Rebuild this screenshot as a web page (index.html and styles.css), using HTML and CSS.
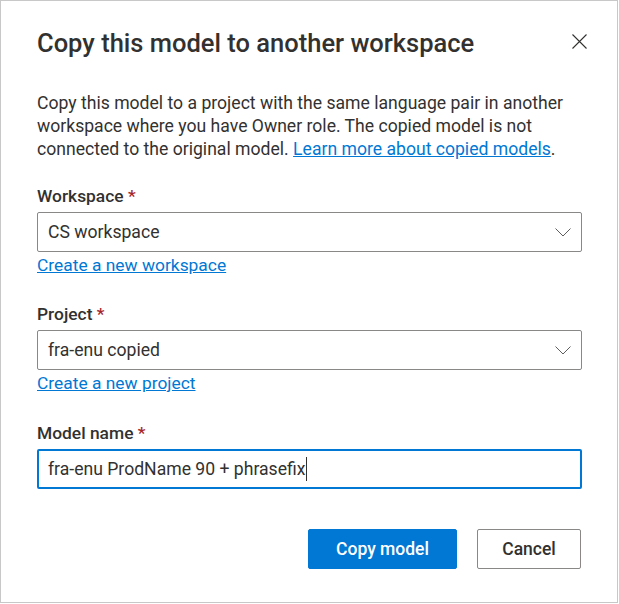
FILE: index.html
```html
<!DOCTYPE html>
<html lang="en">
<head>
<meta charset="utf-8">
<title>Copy this model to another workspace</title>
<link rel="stylesheet" href="styles.css">
</head>
<body>
<div class="dialog">
  <div class="header">
    <h1 class="title">Copy this model to another workspace</h1>
    <button class="close" aria-label="Close">
      <svg width="15" height="15" viewBox="0 0 15 15"><path d="M0.5 0.5 L14.5 14.5 M14.5 0.5 L0.5 14.5" stroke="#323130" stroke-width="1.1" fill="none"/></svg>
    </button>
  </div>
  <p class="desc">Copy this model to a project with the same language pair in another workspace where you have Owner role. The copied model is not connected to the original model. <a href="#" class="link">Learn more about copied models</a>.</p>

  <div class="field">
    <div class="label">Workspace <span class="req">*</span></div>
    <div class="select"><span>CS workspace</span>
      <svg class="chev" width="16" height="9" viewBox="0 0 16 9"><path d="M0.5 0.5 L8 8 L15.5 0.5" stroke="#605e5c" stroke-width="1" fill="none"/></svg>
    </div>
    <a href="#" class="link sub">Create a new workspace</a>
  </div>

  <div class="field second">
    <div class="label">Project <span class="req">*</span></div>
    <div class="select"><span>fra-enu copied</span>
      <svg class="chev" width="16" height="9" viewBox="0 0 16 9"><path d="M0.5 0.5 L8 8 L15.5 0.5" stroke="#605e5c" stroke-width="1" fill="none"/></svg>
    </div>
    <a href="#" class="link sub">Create a new project</a>
  </div>

  <div class="field third">
    <div class="label">Model name <span class="req">*</span></div>
    <div class="input"><span>fra-enu ProdName 90 + phrasefix</span><span class="caret"></span></div>
  </div>

  <div class="actions">
    <button class="btn primary">Copy model</button>
    <button class="btn secondary">Cancel</button>
  </div>
</div>
</body>
</html>
```

FILE: styles.css
```css
html, body {
  margin: 0;
  padding: 0;
  background: #ffffff;
}
body {
  font-family: Roboto, "Open Sans", sans-serif;
  color: #323130;
}
.dialog {
  box-sizing: border-box;
  width: 618px;
  height: 603px;
  border: 1px solid #c8c8c8;
  padding: 0 36px 0 36px;
}
.header {
  display: flex;
  align-items: center;
  justify-content: space-between;
  padding-top: 24px;
}
.title {
  margin: 0;
  font-size: 25.5px;
  font-weight: 500;
  line-height: 36px;
  color: #323130;
}
.close {
  border: 0;
  background: none;
  padding: 0;
  width: 15px;
  height: 15px;
  margin-right: -6px;
  margin-top: -4px;
  display: flex;
}
.desc {
  margin: 31px 0 24px;
  font-size: 17.6px;
  line-height: 23px;
}
.link {
  color: #0078d4;
  text-decoration: underline;
}
.field {
  display: flex;
  flex-direction: column;
  align-items: flex-start;
}
.field.second { margin-top: 26px; }
.field.third { margin-top: 27px; }
.label {
  font-size: 17.4px;
  font-weight: 500;
  line-height: 23px;
  margin-bottom: 4px;
}
.req { color: #a4262c; }
.select, .input {
  box-sizing: border-box;
  width: 545px;
  height: 40px;
  border: 1px solid #8a8886;
  border-radius: 2px;
  display: flex;
  align-items: center;
  justify-content: space-between;
  padding: 0 10px 0 10px;
  font-size: 17.6px;
}
.input {
  border: 2px solid #0078d4;
  justify-content: flex-start;
  padding-left: 9px;
}
.caret {
  display: inline-block;
  width: 1px;
  height: 24px;
  background: #323130;
}
.sub {
  font-size: 17.4px;
  line-height: 23px;
  padding-top: 2px;
}
.actions {
  display: flex;
  justify-content: flex-end;
  gap: 20px;
  margin-top: 40px;
}
.btn {
  height: 40px;
  border-radius: 2px;
  font-family: inherit;
  font-size: 17.5px;
  font-weight: 500;
  cursor: pointer;
}
.primary {
  width: 149px;
  background: #0078d4;
  border: 1px solid #0078d4;
  color: #ffffff;
}
.secondary {
  width: 104px;
  background: #ffffff;
  border: 1px solid #8a8886;
  color: #323130;
}
```
